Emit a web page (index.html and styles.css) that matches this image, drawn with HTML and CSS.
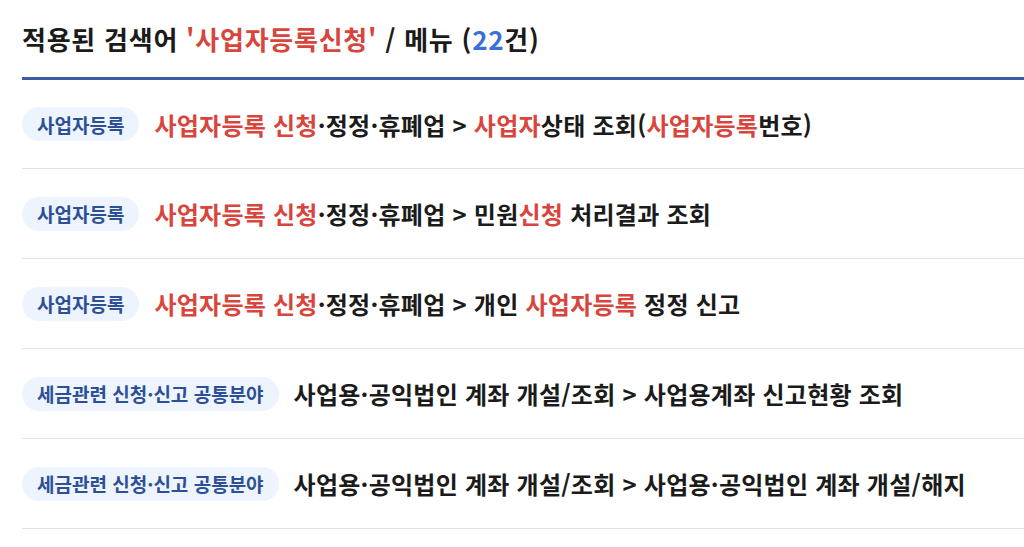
FILE: index.html
```html
<!DOCTYPE html>
<html lang="ko">
<head>
<meta charset="utf-8">
<title>검색 결과 - 메뉴</title>
<link rel="stylesheet" href="styles.css">
</head>
<body>
<section class="result">
  <h2 class="result-title">적용된 검색어 <span class="hl">'사업자등록신청'</span> / 메뉴 (<span class="count">22</span>건)</h2>
  <ul class="menu-list">
    <li class="menu-item">
      <span class="badge">사업자등록</span>
      <span class="path"><span class="hl">사업자등록 신청</span>·정정·휴폐업 &gt; <span class="hl">사업자</span>상태 조회(<span class="hl">사업자등록</span>번호)</span>
    </li>
    <li class="menu-item">
      <span class="badge">사업자등록</span>
      <span class="path"><span class="hl">사업자등록 신청</span>·정정·휴폐업 &gt; 민원<span class="hl">신청</span> 처리결과 조회</span>
    </li>
    <li class="menu-item">
      <span class="badge">사업자등록</span>
      <span class="path"><span class="hl">사업자등록 신청</span>·정정·휴폐업 &gt; 개인 <span class="hl">사업자등록</span> 정정 신고</span>
    </li>
    <li class="menu-item">
      <span class="badge">세금관련 신청·신고 공통분야</span>
      <span class="path">사업용·공익법인 계좌 개설/조회 &gt; 사업용계좌 신고현황 조회</span>
    </li>
    <li class="menu-item">
      <span class="badge">세금관련 신청·신고 공통분야</span>
      <span class="path">사업용·공익법인 계좌 개설/조회 &gt; 사업용·공익법인 계좌 개설/해지</span>
    </li>
  </ul>
</section>
</body>
</html>
```
FILE: styles.css
```css
html, body {
  margin: 0;
  padding: 0;
  background: #ffffff;
}

body {
  font-family: "Noto Sans CJK KR", "Noto Sans", sans-serif;
  color: #1b1b1b;
  overflow: hidden;
}

.result {
  padding-left: 22px;
}

.result-title {
  margin: 0;
  box-sizing: border-box;
  height: 80px;
  padding-top: 21px;
  line-height: 36px;
  font-size: 26px;
  font-weight: 700;
  letter-spacing: 0.75px;
  white-space: nowrap;
  border-bottom: 3px solid #3b5d9f;
}

.hl {
  color: #d8453d;
}

.count {
  color: #3a6fd6;
}

.menu-list {
  list-style: none;
  margin: 0;
  padding: 0;
}

.menu-item {
  display: flex;
  align-items: center;
  gap: 15px;
  height: 89px;
  border-bottom: 1px solid #e2e2e2;
}

.menu-item:first-child {
  height: 88px;
}

.badge {
  flex: none;
  display: inline-flex;
  align-items: center;
  height: 34px;
  padding: 0 15px;
  border-radius: 17px;
  background: #edf4fd;
  color: #2c4f95;
  font-size: 19px;
  font-weight: 700;
  letter-spacing: 0;
}

.path {
  font-size: 24px;
  font-weight: 700;
  letter-spacing: 0.25px;
  white-space: nowrap;
}
```
